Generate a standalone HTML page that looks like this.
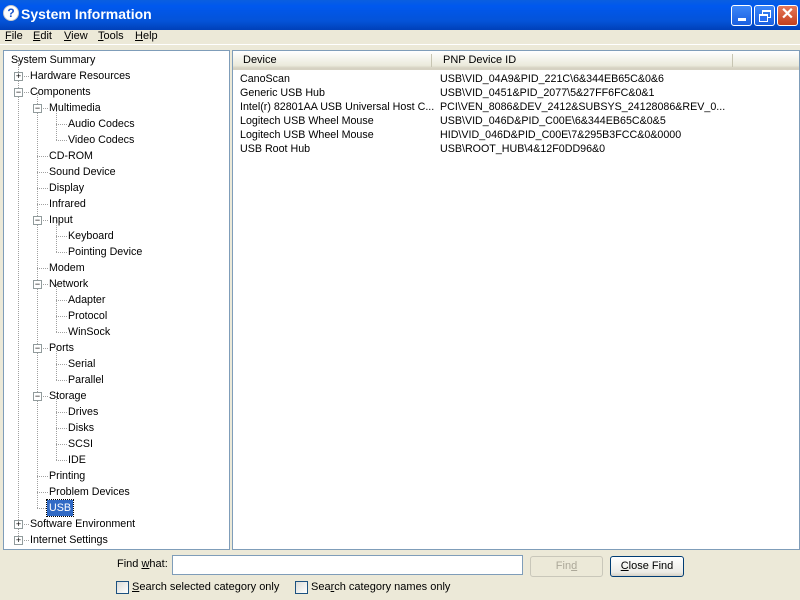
<!DOCTYPE html>
<html><head><style>
*{margin:0;padding:0;box-sizing:border-box}
body{width:800px;height:600px;overflow:hidden;background:#ece9d8;font-family:"Liberation Sans",Tahoma,sans-serif;font-size:11px;color:#000;position:relative}
.a{position:absolute;white-space:nowrap}
#title{left:0;top:0;width:800px;height:30px;background:linear-gradient(#0a5fe0,#0058ee 20%,#0453d8 70%,#0040b8);}
#title .t{left:21px;top:6px;color:#fff;font-size:14px;font-weight:bold}
.btn{top:5px;width:21px;height:21px;border:1px solid #fff;border-radius:3px;background:linear-gradient(#3c86f8,#1a5fe0)}
.u{text-decoration:underline}
.pane{background:#fff;border:1px solid #7f9db9}
.row{height:16px;line-height:16px}
.box{width:9px;height:9px;border:1px solid #919b9c;background:#fff;font-size:9px;line-height:7px;text-align:center;color:#000}
.vl{border-left:1px dotted #a0a0a0;width:0}
.hl{border-top:1px dotted #a0a0a0;height:0}
.cb{width:13px;height:13px;border:1px solid #1c5180;background:linear-gradient(135deg,#dcdcd7,#fff)}
.m{top:29px;line-height:14px}
</style></head><body>
<div id="title" class="a">
 <div class="a" style="left:3px;top:5px;width:16px;height:16px;border-radius:50%;background:#fff;border:1px solid #ccc;color:#1953c8;font-weight:bold;font-size:12px;text-align:center;line-height:14px">?</div>
 <div class="a t">System Information</div>
 <div class="a btn" style="left:731px"><div class="a" style="left:6px;top:12px;width:8px;height:3px;background:#fff"></div></div>
 <div class="a btn" style="left:754px"><div class="a" style="left:7px;top:4px;width:9px;height:8px;border:1px solid #fff;border-top-width:2px"></div><div class="a" style="left:4px;top:8px;width:9px;height:8px;border:1px solid #fff;border-top-width:2px;background:#2a6ef0"></div></div>
 <div class="a btn" style="left:777px;background:linear-gradient(#e6785a,#c4401e);color:#fff;font-size:16px;text-align:center;line-height:18px;font-weight:bold">✕</div>
</div>
<div class="a m" style="left:5px"><span class="u">F</span>ile</div>
<div class="a m" style="left:33px"><span class="u">E</span>dit</div>
<div class="a m" style="left:64px"><span class="u">V</span>iew</div>
<div class="a m" style="left:98px"><span class="u">T</span>ools</div>
<div class="a m" style="left:135px"><span class="u">H</span>elp</div>
<div class="a" style="left:0;top:44px;width:800px;height:1px;background:#fff"></div>

<div class="a pane" style="left:3px;top:50px;width:227px;height:500px;overflow:hidden;font-size:10.7px" id="tree"></div>
<div class="a pane" style="left:232px;top:50px;width:568px;height:500px;overflow:hidden">
 <div class="a" style="left:0;top:0;width:568px;height:19px;background:linear-gradient(#fff,#ebeadb 85%,#d6d2c2);border-bottom:2px solid #d6d2c2"></div>
 <div class="a" style="left:198px;top:3px;width:1px;height:13px;background:#c7c5b2"></div>
 <div class="a" style="left:499px;top:3px;width:1px;height:13px;background:#c7c5b2"></div>
 <div class="a" style="left:10px;top:3px">Device</div>
 <div class="a" style="left:210px;top:3px">PNP Device ID</div>
 <div class="a" style="left:7px;top:21px;line-height:14px;font-size:10.7px">CanoScan<br>Generic USB Hub<br>Intel(r) 82801AA USB Universal Host C...<br>Logitech USB Wheel Mouse<br>Logitech USB Wheel Mouse<br>USB Root Hub</div>
 <div class="a" style="left:207px;top:21px;line-height:14px;font-size:10.7px">USB\VID_04A9&amp;PID_221C\6&amp;344EB65C&amp;0&amp;6<br>USB\VID_0451&amp;PID_2077\5&amp;27FF6FC&amp;0&amp;1<br>PCI\VEN_8086&amp;DEV_2412&amp;SUBSYS_24128086&amp;REV_0...<br>USB\VID_046D&amp;PID_C00E\6&amp;344EB65C&amp;0&amp;5<br>HID\VID_046D&amp;PID_C00E\7&amp;295B3FCC&amp;0&amp;0000<br>USB\ROOT_HUB\4&amp;12F0DD96&amp;0</div>
</div>

<div class="a" style="left:117px;top:558px"><span>Find <span class="u">w</span>hat:</span></div>
<div class="a" style="left:172px;top:555px;width:351px;height:20px;background:#fff;border:1px solid #7f9db9"></div>
<div class="a" style="left:530px;top:556px;width:73px;height:21px;border:1px solid #c9c7ba;border-radius:3px;color:#aca899;text-align:center;line-height:19px">Fin<span class="u">d</span></div>
<div class="a" style="left:610px;top:556px;width:74px;height:21px;border:1px solid #003c74;border-radius:3px;background:linear-gradient(#fff,#ecebe6 80%,#d6d0c5);text-align:center;line-height:19px"><span class="u">C</span>lose Find</div>
<div class="a cb" style="left:116px;top:581px"></div>
<div class="a" style="left:132px;top:581px"><span class="u">S</span>earch selected category only</div>
<div class="a cb" style="left:295px;top:581px"></div>
<div class="a" style="left:311px;top:581px">Sea<span class="u">r</span>ch category names only</div>

<script>
var items=[[0,"System Summary",""],[1,"Hardware Resources","+"],[1,"Components","-"],[2,"Multimedia","-"],[3,"Audio Codecs"],[3,"Video Codecs"],[2,"CD-ROM"],[2,"Sound Device"],[2,"Display"],[2,"Infrared"],[2,"Input","-"],[3,"Keyboard"],[3,"Pointing Device"],[2,"Modem"],[2,"Network","-"],[3,"Adapter"],[3,"Protocol"],[3,"WinSock"],[2,"Ports","-"],[3,"Serial"],[3,"Parallel"],[2,"Storage","-"],[3,"Drives"],[3,"Disks"],[3,"SCSI"],[3,"IDE"],[2,"Printing"],[2,"Problem Devices"],[2,"USB"],[1,"Software Environment","+"],[1,"Internet Settings","+"]];
var h="";var tx=[7,26,45,64];var bx=[0,10,29,48];
function vl(x,a,b){h+='<div class="a vl" style="left:'+x+'px;top:'+(1+16*a+8)+'px;height:'+(16*(b-a))+'px"></div>';}
vl(14,0,30);vl(33,2,28);
var last={};
for(var i=0;i<items.length;i++){var it=items[i],l=it[0];if(l==3){var p=i;while(items[p-1][0]==3)p--; last[p]=i;}}
for(var k in last){vl(52,+k-1,last[k]);}
for(var i=0;i<items.length;i++){var it=items[i],y=1+16*i,l=it[0];
 if(l>0){h+='<div class="a hl" style="left:'+(bx[l]+4)+'px;top:'+(y+8)+'px;width:'+(tx[l]-bx[l]-5)+'px"></div>';}
 if(it[2]){h+='<div class="a box" style="left:'+(bx[l])+'px;top:'+(y+4)+'px">'+(it[2]=="+"?"+":"−")+'</div>';}
 var sel=it[1]=="USB";
 h+='<div class="a row" style="left:'+(tx[l]-2)+'px;top:'+y+'px;padding:0 2px;'+(sel?'background:#316ac5;color:#fff;outline:1px dotted #000':'')+'">'+it[1]+'</div>';}
document.getElementById("tree").innerHTML=h;
</script>
</body></html>
